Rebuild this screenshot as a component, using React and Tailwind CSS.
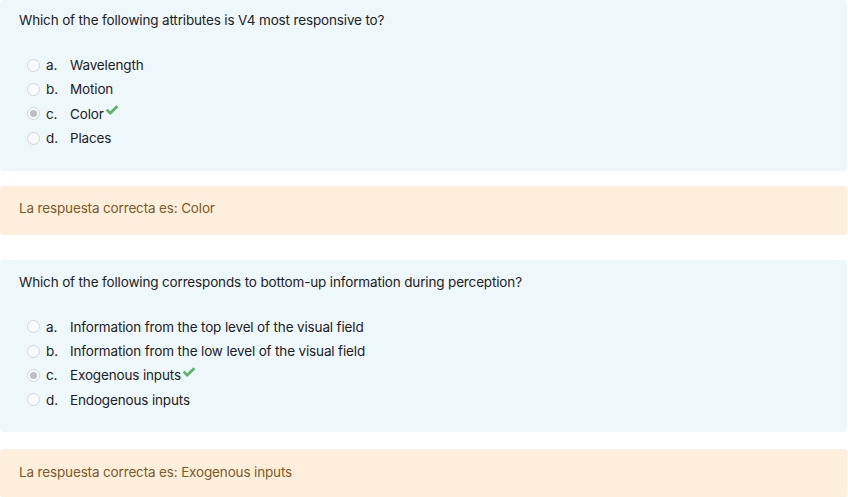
import React from "react";

const Check = () => (
  <svg width="14" height="11" viewBox="0 0 14 11" className="ml-[1px] -mt-[7px]">
    <path d="M0.6 5.6 L2.6 3.7 L5.2 6.2 L11.4 0.3 L13.4 2.2 L5.2 10 Z" fill="#5bb466" />
  </svg>
);

const Radio = ({ checked }) => (
  <span className="flex h-[13px] w-[13px] items-center justify-center rounded-full border border-[#d3d6d9] bg-[#f8fafb]">
    {checked && <span className="h-[7px] w-[7px] rounded-full bg-[#bcc0c3]" />}
  </span>
);

const Question = ({ q, options, correct, className = "" }) => (
  <div className={"mr-[1px] rounded-[4px] bg-[#eef8fb] px-[19px] pb-[20px] " + className}>
    <div className="text-[13.5px] leading-[20px] tracking-[-0.15px] text-[#1d2125]">{q}</div>
    <div className="mt-[23px] flex flex-col">
      {options.map((o, i) => (
        <div key={i} className="flex h-[24.4px] items-center pl-[8px] text-[13.5px] tracking-[-0.15px] text-[#1d2125]">
          <Radio checked={i === correct} />
          <span className="ml-[6px] w-[24px]">{String.fromCharCode(97 + i)}.</span>
          <span className="flex items-center">
            {o}
            {i === correct && <Check />}
          </span>
        </div>
      ))}
    </div>
  </div>
);

const Outcome = ({ text }) => (
  <div className="mr-[1px] flex h-[49px] items-center rounded-[4px] bg-[#fdefdc] px-[19px] pb-[4px] text-[13.5px] tracking-[-0.15px] text-[#7d5a29]">
    {text}
  </div>
);

export default function App() {
  return (
    <div className="h-[497px] w-[848px] overflow-hidden bg-white" style={{ fontFamily: "Inter, 'Noto Sans', sans-serif" }}>
      <Question
        className="pt-[10px]"
        q="Which of the following attributes is V4 most responsive to?"
        options={["Wavelength", "Motion", "Color", "Places"]}
        correct={2}
      />
      <div className="mt-[15px]">
        <Outcome text="La respuesta correcta es: Color" />
      </div>
      <div className="mt-[25px]">
        <Question
          className="pt-[12px]"
          q="Which of the following corresponds to bottom-up information during perception?"
          options={[
            "Information from the top level of the visual field",
            "Information from the low level of the visual field",
            "Exogenous inputs",
            "Endogenous inputs",
          ]}
          correct={2}
        />
      </div>
      <div className="mt-[17px]">
        <Outcome text="La respuesta correcta es: Exogenous inputs" />
      </div>
    </div>
  );
}
